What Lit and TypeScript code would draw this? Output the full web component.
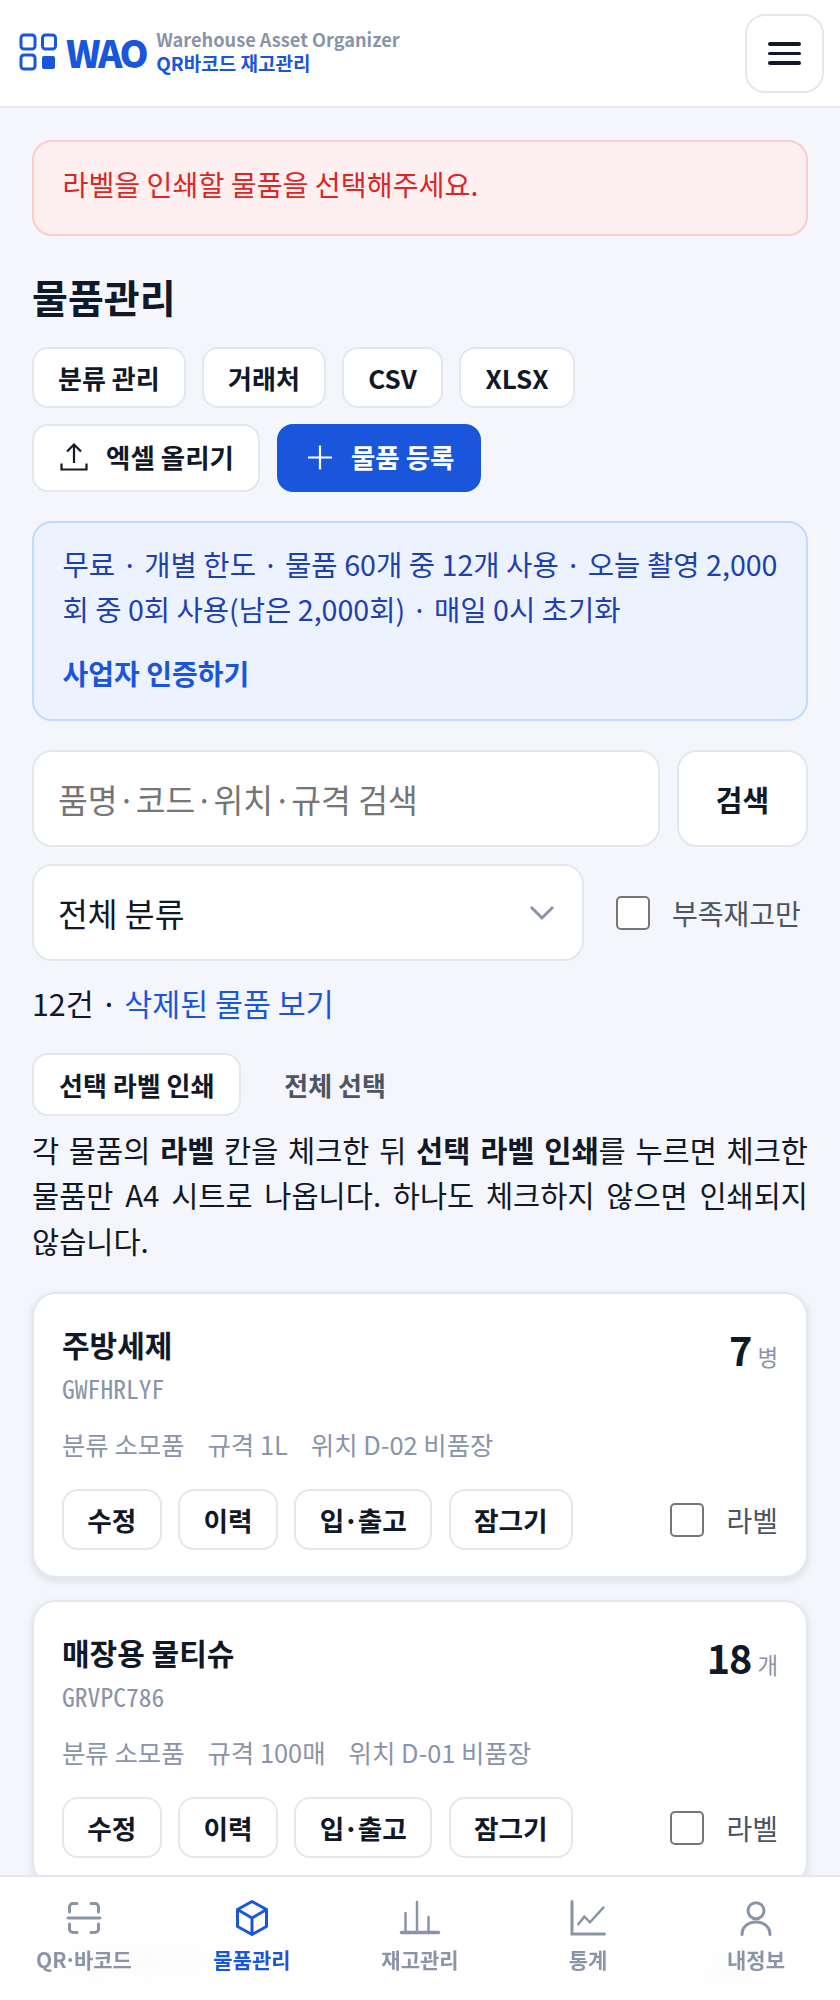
import { LitElement, html, css, svg } from "lit";
import { customElement } from "lit/decorators.js";

type Item = { name: string; code: string; qty: number; unit: string; cat: string; spec: string; loc: string };

const items: Item[] = [
  { name: "주방세제", code: "GWFHRLYF", qty: 7, unit: "병", cat: "소모품", spec: "1L", loc: "D-02 비품장" },
  { name: "매장용 물티슈", code: "GRVPC786", qty: 18, unit: "개", cat: "소모품", spec: "100매", loc: "D-01 비품장" },
  { name: "포장 테이프", code: "GQ7LMN42", qty: 24, unit: "개", cat: "소모품", spec: "48mm", loc: "C-03 선반" },
];

// width, height, shapes; each one is drawn on its own little grid
const navIcons = {
  scan: [32, 32, svg`<path d="M1.500 10V5A3.500 3.500 0 0 1 5 1.500H9M23 1.500h4A3.500 3.500 0 0 1 30.500 5V10M30.500 22v5a3.500 3.500 0 0 1-3.500 3.500H23M9 30.500H5A3.500 3.500 0 0 1 1.500 27V22M0 16h32"/>`],
  box: [32, 36, svg`<path stroke-linejoin="round" d="M16 1.500 30.500 9.500v17L16 34.500 1.500 26.500v-17zM1.500 9.500 16 18 30.500 9.500M16 18v16.500"/>`],
  bars: [40, 32, svg`<path d="M1.500 30.500h37" stroke-width="3.500"/><path stroke-width="2.500" d="M5.500 30V11M17 30V0M28.500 30V15"/>`],
  chart: [36, 36, svg`<path d="M2 1.500V34H34.500"/><path stroke-width="2.500" d="M8.300 24.300 14.300 16.700 20 22.300 33.300 7.700"/>`],
  user: [32, 34, svg`<circle cx="16" cy="9.700" r="8"/><path d="M2 33.500C2 26 8 21 16 21S30 26 30 33.500"/>`],
} as const;

@customElement("app-root")
export class AppRoot extends LitElement {
  static styles = css`
    :host {
      display: block;
      min-height: 2000px;
      background: #f4f6fb;
      color: #111827;
      font-family: "Noto Sans CJK KR", "Noto Sans", sans-serif;
    }
    button {
      font: inherit;
      color: inherit;
      background: #fff;
      margin: 0;
    }
    .top {
      display: flex;
      align-items: center;
      justify-content: space-between;
      height: 108px;
      box-sizing: border-box;
      padding: 0 16px 0 19px;
      background: #fff;
      border-bottom: 2px solid #e2e8f0;
    }
    .brand {
      display: flex;
      align-items: center;
      margin-bottom: 2px;
    }
    .logo {
      width: 38px;
      height: 38px;
      margin-right: 9px;
      fill: none;
      stroke: #1a56db;
      stroke-width: 3;
    }
    .logo .solid {
      fill: #1a56db;
      stroke: none;
    }
    .wao {
      font-size: 37px;
      font-weight: 900;
      color: #1a56db;
      letter-spacing: -2.500px;
      line-height: 1;
      margin-right: 10px;
    }
    .sub {
      display: flex;
      flex-direction: column;
      margin-bottom: 2px;
      font-weight: 700;
      line-height: 23.500px;
    }
    .sub .en {
      font-size: 18.200px;
      color: #8a94a8;
    }
    .sub .ko {
      font-size: 19px;
      color: #1a56db;
    }
    .menu {
      display: flex;
      flex-direction: column;
      align-items: center;
      justify-content: center;
      gap: 6px;
      width: 79px;
      height: 79px;
      margin-top: 1px;
      border: 2px solid #e2e8f0;
      border-radius: 20px;
      padding: 0;
    }
    .menu span {
      width: 33px;
      height: 3.500px;
      border-radius: 2px;
      background: #111827;
    }
    main {
      display: block;
      padding: 32px 32px 0;
    }
    .alert {
      display: flex;
      align-items: center;
      height: 96px;
      box-sizing: border-box;
      padding: 0 28.500px 9px;
      background: #fef0f0;
      border: 2px solid #fecaca;
      border-radius: 20px;
      color: #dc2626;
      font-size: 28.200px;
    }
    h1 {
      margin: 30px 0 0;
      font-size: 39px;
      line-height: 60px;
      font-weight: 700;
    }
    .row {
      display: flex;
      align-items: center;
      gap: 16.500px;
    }
    .actions {
      margin-top: 21px;
    }
    .actions + .actions {
      margin-top: 16px;
    }
    .btn {
      display: inline-flex;
      align-items: center;
      height: 61px;
      box-sizing: border-box;
      padding: 0 24px;
      border: 2px solid #e2e8f0;
      border-radius: 16px;
      font-size: 26px;
      font-weight: 700;
      white-space: nowrap;
    }
    .btn.tall {
      height: 68px;
      gap: 15px;
      padding: 0 24.500px 3px 25px;
      font-size: 26.500px;
    }
    .btn svg {
      width: 32px;
      height: 32px;
      fill: none;
      stroke: currentColor;
      stroke-width: 2.200;
    }
    .btn.primary {
      background: #1a56db;
      border-color: #1a56db;
      color: #fff;
    }
    .plan {
      margin-top: 29px;
      height: 200px;
      box-sizing: border-box;
      padding: 18px 28.500px 0;
      background: #ecf3ff;
      border: 2px solid #bfdbfe;
      border-radius: 20px;
      color: #1e40af;
      font-size: 28.600px;
      line-height: 45px;
      text-align: justify;
    }
    .plan a {
      display: block;
      margin-top: 20px;
      color: #1a56db;
      font-weight: 700;
      font-size: 28px;
    }
    .search {
      display: flex;
      gap: 17px;
      margin-top: 29px;
    }
    .field {
      display: flex;
      align-items: center;
      height: 97px;
      box-sizing: border-box;
      padding: 0 24px;
      background: #fff;
      border: 2px solid #e2e8f0;
      border-radius: 20px;
      font-size: 32.400px;
    }
    .search .field {
      flex: 1;
      color: #757575;
    }
    .go {
      width: 131px;
      height: 97px;
      border: 2px solid #e2e8f0;
      border-radius: 20px;
      font-size: 29px;
      font-weight: 700;
    }
    .filter {
      display: flex;
      align-items: center;
      margin-top: 17px;
    }
    .filter .field {
      width: 552px;
      padding-right: 27px;
      justify-content: space-between;
    }
    .chev {
      width: 26px;
      height: 26px;
      fill: none;
      stroke: #8a94a8;
      stroke-width: 3;
    }
    .check {
      display: inline-block;
      flex: none;
      width: 34px;
      height: 34px;
      box-sizing: border-box;
      background: #fff;
      border: 2px solid #767676;
      border-radius: 5px;
    }
    .low {
      display: flex;
      align-items: center;
      gap: 22px;
      margin-left: 32px;
      font-size: 28px;
      color: #4b5563;
    }
    .count {
      margin-top: 19.500px;
      font-size: 30.400px;
      line-height: 44px;
    }
    .count a {
      color: #1a56db;
    }
    .tabs {
      display: flex;
      align-items: center;
      margin-top: 28px;
    }
    .tabs .btn {
      height: 63px;
      padding: 0 25px;
    }
    .tabs .plain {
      margin-left: 43px;
      font-size: 26px;
      font-weight: 700;
      color: #4b5563;
    }
    .hint {
      margin: 11px 0 0;
      font-size: 29.500px;
      line-height: 45.500px;
      text-align: justify;
      word-break: keep-all;
    }
    .hint b {
      font-weight: 700;
    }
    .cards {
      display: flex;
      flex-direction: column;
      gap: 22px;
      margin-top: 29px;
    }
    .card {
      box-sizing: border-box;
      height: 286px;
      padding: 28px 28px;
      background: #fff;
      border: 2px solid #e2e8f0;
      border-radius: 24px;
      box-shadow: 0 3px 8px rgba(15, 23, 42, 0.1);
    }
    .head {
      display: flex;
      justify-content: space-between;
    }
    .name {
      font-size: 30px;
      font-weight: 700;
      line-height: 44px;
    }
    .code {
      font-family: "Noto Sans Mono CJK KR", "DejaVu Sans Mono", monospace;
      font-size: 25.600px;
      line-height: 44px;
      color: #8a94a8;
    }
    .qty {
      display: flex;
      align-items: baseline;
      gap: 6px;
      margin-top: 1px;
      font-size: 39.600px;
      font-weight: 700;
      letter-spacing: -1px;
      line-height: 52px;
    }
    .qty small {
      font-size: 22.400px;
      font-weight: 400;
      letter-spacing: 0;
      color: #8a94a8;
    }
    .meta {
      display: flex;
      gap: 23px;
      margin-top: 15px;
      font-size: 25.400px;
      line-height: 38px;
      color: #8a94a8;
    }
    .foot {
      display: flex;
      align-items: center;
      justify-content: space-between;
      margin-top: 26px;
    }
    .foot .btn {
      height: 61px;
      padding: 0 23.300px;
      font-size: 26.700px;
    }
    .foot .dot {
      margin: 0 -1.200px;
    }
    .label {
      display: flex;
      align-items: center;
      gap: 22px;
      font-size: 28px;
      color: #4b5563;
    }
    nav {
      position: fixed;
      left: 0;
      right: 0;
      bottom: 0;
      display: grid;
      grid-template-columns: repeat(5, 1fr);
      height: 125px;
      box-sizing: border-box;
      padding-top: 23px;
      background: rgba(255, 255, 255, 0.96);
      border-top: 2px solid #e2e8f0;
      backdrop-filter: blur(12px);
    }
    .tab {
      display: flex;
      flex-direction: column;
      align-items: center;
      gap: 8px;
      font-size: 21px;
      line-height: 30px;
      font-weight: 700;
      color: #8a94a8;
    }
    .tab.on {
      color: #1a56db;
    }
    .ico {
      display: flex;
      align-items: center;
      justify-content: center;
      height: 36px;
    }
    .ico svg {
      fill: none;
      stroke: currentColor;
      stroke-width: 3;
      stroke-linecap: round;
      overflow: visible;
    }
    .dot {
      margin: 0 -2.500px;
    }
  `;

  private card(it: Item) {
    return html`
      <article class="card">
        <div class="head">
          <div>
            <div class="name">${it.name}</div>
            <div class="code">${it.code}</div>
          </div>
          <div class="qty">${it.qty}<small>${it.unit}</small></div>
        </div>
        <div class="meta">
          <span>분류 ${it.cat}</span><span>규격 ${it.spec}</span><span>위치 ${it.loc}</span>
        </div>
        <div class="foot">
          <div class="row">
            <button class="btn">수정</button>
            <button class="btn">이력</button>
            <button class="btn">입<span class="dot">·</span>출고</button>
            <button class="btn">잠그기</button>
          </div>
          <div class="label"><i class="check"></i>라벨</div>
        </div>
      </article>
    `;
  }

  private navTab(icon: keyof typeof navIcons, label: unknown, on = false) {
    const [w, h, shapes] = navIcons[icon];
    return html`
      <div class="tab ${on ? "on" : ""}">
        <div class="ico"><svg width=${w} height=${h} viewBox="0 0 ${w} ${h}">${shapes}</svg></div>
        <span>${label}</span>
      </div>
    `;
  }

  render() {
    return html`
      <header class="top">
        <div class="brand">
          <svg class="logo" viewBox="0 0 38 38">
            <rect x="2" y="2" width="14" height="14" rx="3" />
            <rect x="23.500" y="2" width="13" height="14" rx="3" />
            <rect x="2" y="22" width="14" height="14" rx="3" />
            <rect class="solid" x="23" y="23" width="13" height="13" rx="2" />
          </svg>
          <span class="wao">WAO</span>
          <div class="sub">
            <span class="en">Warehouse Asset Organizer</span>
            <span class="ko">QR바코드 재고관리</span>
          </div>
        </div>
        <button class="menu" aria-label="메뉴"><span></span><span></span><span></span></button>
      </header>
      <main>
        <div class="alert">라벨을 인쇄할 물품을 선택해주세요.</div>
        <h1>물품관리</h1>
        <div class="row actions">
          <button class="btn">분류 관리</button>
          <button class="btn">거래처</button>
          <button class="btn">CSV</button>
          <button class="btn">XLSX</button>
        </div>
        <div class="row actions">
          <button class="btn tall">
            <svg viewBox="0 0 32 32"><path d="M15 22V3.500M8 10.500l7-7 7 7M2.500 22.500v6h25v-6" /></svg>엑셀 올리기
          </button>
          <button class="btn tall primary">
            <svg viewBox="0 0 32 32"><path d="M16 4.500v24M4 16.500h24" /></svg>물품 등록
          </button>
        </div>
        <section class="plan">
          무료 · 개별 한도 · 물품 60개 중 12개 사용 · 오늘 촬영 2,000회 중 0회 사용(남은 2,000회) · 매일 0시 초기화
          <a>사업자 인증하기</a>
        </section>
        <div class="search">
          <div class="field">품명·코드·위치·규격 검색</div>
          <button class="go">검색</button>
        </div>
        <div class="filter">
          <div class="field">
            전체 분류
            <svg class="chev" viewBox="0 0 26 26"><path d="M2 7l11 11L24 7" /></svg>
          </div>
          <label class="low"><i class="check"></i>부족재고만</label>
        </div>
        <div class="count">12건 · <a>삭제된 물품 보기</a></div>
        <div class="tabs">
          <button class="btn">선택 라벨 인쇄</button>
          <span class="plain">전체 선택</span>
        </div>
        <p class="hint">
          각 물품의 <b>라벨</b> 칸을 체크한 뒤 <b>선택 라벨 인쇄</b>를 누르면 체크한 물품만 A4 시트로 나옵니다. 하나도
          체크하지 않으면 인쇄되지 않습니다.
        </p>
        <div class="cards">${items.map((it) => this.card(it))}</div>
      </main>
      <nav>
        ${this.navTab("scan", html`QR<span class="dot">·</span>바코드`)}
        ${this.navTab("box", "물품관리", true)}
        ${this.navTab("bars", "재고관리")}
        ${this.navTab("chart", "통계")}
        ${this.navTab("user", "내정보")}
      </nav>
    `;
  }
}
